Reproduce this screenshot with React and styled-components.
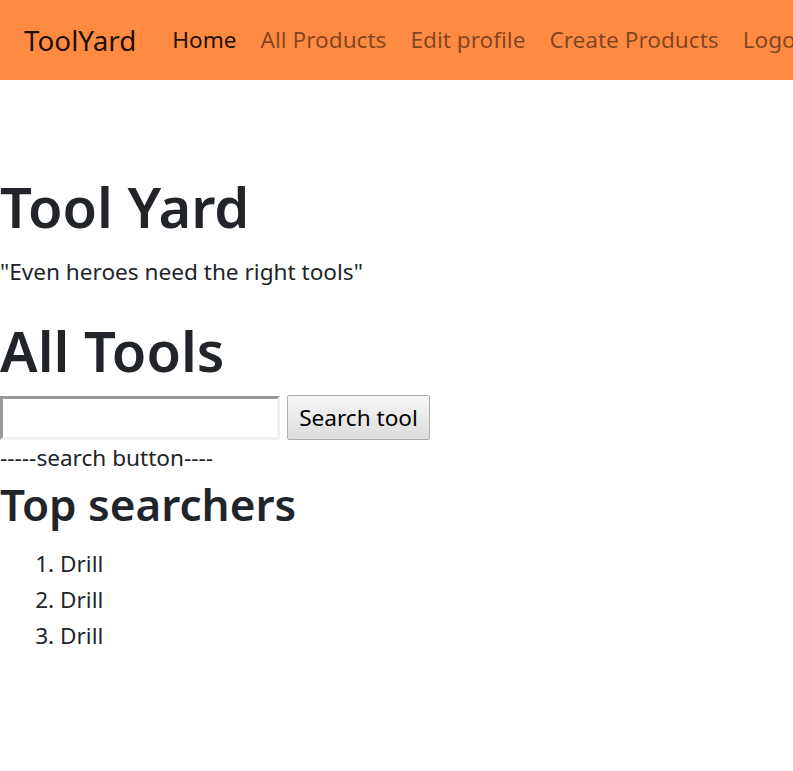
import React, { useState } from 'react';
import styled, { createGlobalStyle } from 'styled-components';

const GlobalStyle = createGlobalStyle`
  html, body {
    margin: 0;
    padding: 0;
    background: #ffffff;
    overflow-x: hidden;
  }
  body {
    font-family: "Segoe UI", "Noto Sans", "Open Sans", sans-serif;
    font-size: 22.6px;
    line-height: 36px;
    color: #212529;
  }
`;

const Navbar = styled.nav`
  display: flex;
  align-items: center;
  height: 80px;
  padding: 0 24px;
  background-color: #ff8a42;
  white-space: nowrap;
  overflow: hidden;
`;

const Brand = styled.a`
  font-size: 27.8px;
  color: rgba(0, 0, 0, 0.9);
  margin-right: 24px;
  text-decoration: none;
`;

const NavLinks = styled.div`
  display: flex;
  align-items: center;
`;

const NavLink = styled.a`
  padding: 0 12px;
  font-size: 22.6px;
  color: ${props => (props.active ? 'rgba(0, 0, 0, 0.9)' : 'rgba(0, 0, 0, 0.5)')};
  text-decoration: none;
`;

const Main = styled.main`
  padding-top: 90px;
`;

const Title = styled.h1`
  margin: 0 0 12px;
  font-size: 56px;
  font-weight: 600;
  line-height: 72px;
`;

const Quote = styled.p`
  margin: 0 0 24px;
`;

const SearchRow = styled.div`
  display: flex;
  align-items: center;
  gap: 7px;
  height: 45px;
  margin-top: -3px;
`;

const SearchInput = styled.input`
  box-sizing: border-box;
  width: 280px;
  height: 44px;
  margin: 0;
  padding: 0 4px;
  font: inherit;
  border-style: solid;
  border-width: 3px;
  border-color: #999999 #f0f0f0 #f0f0f0 #999999;
  outline: none;
`;

const SearchButton = styled.button`
  box-sizing: border-box;
  width: 143px;
  height: 45px;
  margin: 0;
  padding: 0 10px;
  font: inherit;
  color: #000;
  background: linear-gradient(#f6f6f6, #dddddd);
  border: 1px solid #adadad;
  border-radius: 2px;
`;

const Note = styled.div``;

const SubTitle = styled.h2`
  margin: 0 0 12px;
  font-size: 44px;
  font-weight: 600;
  line-height: 57.6px;
`;

const List = styled.ol`
  margin: 0;
  padding-left: 60px;
`;

const links = ['All Products', 'Edit profile', 'Create Products', 'Logout'];

export default function App() {
  const [query, setQuery] = useState('');
  const top = ['Drill', 'Drill', 'Drill'];

  return (
    <>
      <GlobalStyle />
      <Navbar>
        <Brand href="#">ToolYard</Brand>
        <NavLinks>
          <NavLink href="#" active>Home</NavLink>
          {links.map(l => (
            <NavLink href="#" key={l}>{l}</NavLink>
          ))}
        </NavLinks>
      </Navbar>
      <Main>
        <Title>Tool Yard</Title>
        <Quote>"Even heroes need the right tools"</Quote>
        <Title>All Tools</Title>
        <SearchRow>
          <SearchInput value={query} onChange={e => setQuery(e.target.value)} />
          <SearchButton>Search tool</SearchButton>
        </SearchRow>
        <Note>-----search button----</Note>
        <SubTitle>Top searchers</SubTitle>
        <List>
          {top.map((t, i) => (
            <li key={i}>{t}</li>
          ))}
        </List>
      </Main>
    </>
  );
}
